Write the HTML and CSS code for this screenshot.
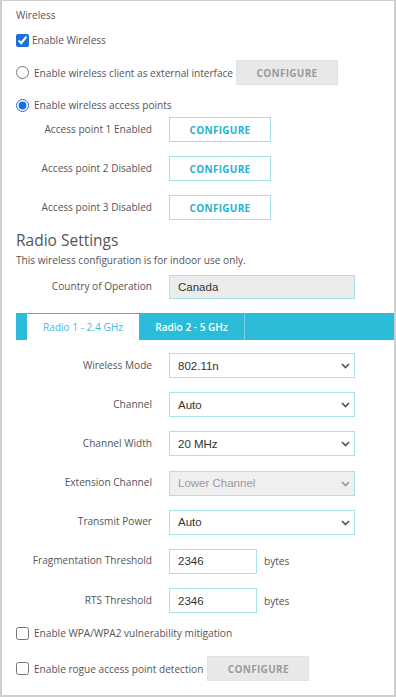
FILE: index.html
```html
<!DOCTYPE html>
<html lang="en">
<head>
    <meta charset="UTF-8">
    <meta name="viewport" content="width=device-width, initial-scale=1.0">
    <title>Wireless Settings</title>
    <link rel="stylesheet" href="styles.css">
</head>
<body>
    <div class="panel">
        <!-- Wireless -->
        <div class="section-title">Wireless</div>

        <label class="check-row enable-row">
            <input type="checkbox" checked>
            <span>Enable Wireless</span>
        </label>

        <div class="check-row client-row">
            <label class="radio-label">
                <input type="radio" name="mode">
                <span>Enable wireless client as external interface</span>
            </label>
            <button type="button" class="btn btn-off">CONFIGURE</button>
        </div>

        <label class="check-row radio-label ap-row">
            <input type="radio" name="mode" checked>
            <span>Enable wireless access points</span>
        </label>

        <div class="ap-list">
            <div class="field">
                <span class="field-label">Access point 1 Enabled</span>
                <button type="button" class="btn">CONFIGURE</button>
            </div>
            <div class="field">
                <span class="field-label">Access point 2 Disabled</span>
                <button type="button" class="btn">CONFIGURE</button>
            </div>
            <div class="field">
                <span class="field-label">Access point 3 Disabled</span>
                <button type="button" class="btn">CONFIGURE</button>
            </div>
        </div>

        <!-- Radio Settings -->
        <h2 class="heading">Radio Settings</h2>
        <p class="note">This wireless configuration is for indoor use only.</p>

        <div class="field country-row">
            <span class="field-label">Country of Operation</span>
            <input type="text" class="text-input readonly" value="Canada" readonly>
        </div>

        <div class="tabs">
            <span class="tab-spacer"></span>
            <span class="tab active">Radio 1 - 2.4 GHz</span>
            <span class="tab">Radio 2 - 5 GHz</span>
        </div>

        <div class="radio-form">
            <div class="field">
                <span class="field-label">Wireless Mode</span>
                <div class="select-wrap">
                    <select class="select"><option>802.11n</option></select>
                    <svg class="chevron" width="9" height="6" viewBox="0 0 9 6"><path d="M1 1l3.5 3.5L8 1" fill="none" stroke="#555" stroke-width="1.7"/></svg>
                </div>
            </div>
            <div class="field">
                <span class="field-label">Channel</span>
                <div class="select-wrap">
                    <select class="select"><option>Auto</option></select>
                    <svg class="chevron" width="9" height="6" viewBox="0 0 9 6"><path d="M1 1l3.5 3.5L8 1" fill="none" stroke="#555" stroke-width="1.7"/></svg>
                </div>
            </div>
            <div class="field">
                <span class="field-label">Channel Width</span>
                <div class="select-wrap">
                    <select class="select"><option>20 MHz</option></select>
                    <svg class="chevron" width="9" height="6" viewBox="0 0 9 6"><path d="M1 1l3.5 3.5L8 1" fill="none" stroke="#555" stroke-width="1.7"/></svg>
                </div>
            </div>
            <div class="field">
                <span class="field-label">Extension Channel</span>
                <div class="select-wrap">
                    <select class="select" disabled><option>Lower Channel</option></select>
                    <svg class="chevron" width="9" height="6" viewBox="0 0 9 6"><path d="M1 1l3.5 3.5L8 1" fill="none" stroke="#999" stroke-width="1.7"/></svg>
                </div>
            </div>
            <div class="field">
                <span class="field-label">Transmit Power</span>
                <div class="select-wrap">
                    <select class="select"><option>Auto</option></select>
                    <svg class="chevron" width="9" height="6" viewBox="0 0 9 6"><path d="M1 1l3.5 3.5L8 1" fill="none" stroke="#555" stroke-width="1.7"/></svg>
                </div>
            </div>
            <div class="field">
                <span class="field-label">Fragmentation Threshold</span>
                <input type="text" class="text-input short" value="2346">
                <span class="unit">bytes</span>
            </div>
            <div class="field">
                <span class="field-label">RTS Threshold</span>
                <input type="text" class="text-input short" value="2346">
                <span class="unit">bytes</span>
            </div>
        </div>

        <label class="check-row wpa-row">
            <input type="checkbox">
            <span>Enable WPA/WPA2 vulnerability mitigation</span>
        </label>

        <div class="check-row rogue-row">
            <label class="check-label">
                <input type="checkbox">
                <span>Enable rogue access point detection</span>
            </label>
            <button type="button" class="btn btn-off">CONFIGURE</button>
        </div>
    </div>
</body>
</html>
```

FILE: styles.css
```css
/* Global */
body {
    margin: 0;
    font-family: "Open Sans", "DejaVu Sans", sans-serif;
    font-size: 10.1px;
    color: #555;
    background: #fff;
}

.panel {
    box-sizing: border-box;
    height: 697px;
    border: 2px solid #cfcfcf;
    border-top-width: 1px;
    padding: 0 0 0 14px;
}

/* Wireless section */
.section-title {
    height: 20px;
    line-height: 20px;
    margin-top: 4px;
}

.check-row {
    display: flex;
    align-items: center;
    height: 20px;
}

.check-row input {
    margin: 0 3px 0 0;
    width: 13px;
    height: 13px;
    accent-color: #1c6fdc;
}

.radio-label,
.check-label {
    display: flex;
    align-items: center;
}

.radio-label input,
.check-label input {
    margin: 0 5px 0 0;
    width: 13px;
    height: 13px;
    accent-color: #1c6fdc;
}

.wpa-row input {
    margin-right: 5px;
}

.enable-row {
    margin-top: 5px;
}

.client-row {
    height: 25px;
    margin-top: 10px;
}

.ap-row {
    margin-top: 10px;
}

.ap-list {
    display: flex;
    flex-direction: column;
    gap: 14px;
    margin-top: 2px;
}

/* Buttons */
.btn {
    box-sizing: border-box;
    width: 102px;
    height: 25px;
    padding: 0;
    margin-left: 3px;
    border: 1px solid #a4e0ec;
    background: #fff;
    color: #26b2d3;
    font-family: "Open Sans", sans-serif;
    font-size: 10px;
    font-weight: 700;
    letter-spacing: 0.3px;
    cursor: pointer;
}

.btn-off {
    background: #e8e8e8;
    border-color: #e2e2e2;
    color: #9b9b9b;
}

.field .btn {
    margin-left: 0;
}

.rogue-row {
    height: 25px;
    margin-top: 13px;
}

.rogue-row .btn {
    margin-left: 4px;
}

/* Fields */
.field {
    display: flex;
    align-items: center;
    height: 25px;
}

.field-label {
    width: 136px;
    margin-right: 17px;
    text-align: right;
    position: relative;
    top: -1px;
}

.text-input,
.select {
    box-sizing: border-box;
    width: 186px;
    height: 25px;
    margin: 0;
    padding: 0 0 0 8px;
    border: 1px solid #a9e1ed;
    background: #fff;
    color: #333;
    font-family: "Liberation Sans", Arial, sans-serif;
    font-size: 11.5px;
    outline: none;
}

.text-input.readonly {
    height: 24px;
    background: #ececec;
}

.text-input.short {
    width: 88px;
}

.unit {
    margin-left: 7px;
}

.select {
    appearance: none;
    -webkit-appearance: none;
    border-radius: 0;
}

.select:disabled {
    background: #efefef;
    color: #9a9a9a;
    opacity: 1;
}

.select-wrap {
    position: relative;
    display: flex;
}

.chevron {
    position: absolute;
    right: 5px;
    top: 10px;
}

/* Radio settings */
.heading {
    margin: 8px 0 0;
    height: 24px;
    line-height: 24px;
    font-size: 15.5px;
    font-weight: 400;
}

.note {
    margin: 0;
    height: 16px;
    line-height: 16px;
}

.country-row {
    height: 24px;
    margin-top: 7px;
}

/* Tabs */
.tabs {
    display: flex;
    height: 27px;
    margin-top: 14px;
    background: #2abcd9;
}

.tab-spacer {
    width: 11px;
}

.tab {
    display: flex;
    align-items: center;
    justify-content: center;
    width: 105px;
    border-right: 1px solid #7fd2e4;
    color: #fff;
    font-weight: 600;
}

.tab.active {
    width: 112px;
    margin-top: 1px;
    border-right: none;
    background: #fff;
    color: #42bcd8;
    font-weight: 400;
}

.radio-form {
    display: flex;
    flex-direction: column;
    gap: 14.2px;
    margin-top: 13px;
}

.wpa-row {
    margin-top: 10px;
}
```
